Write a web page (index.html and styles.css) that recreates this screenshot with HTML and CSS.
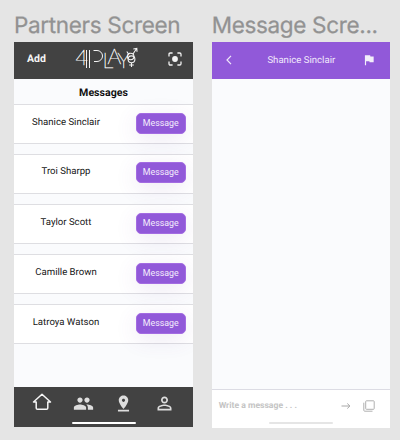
FILE: index.html
```html
<!DOCTYPE html>
<html lang="en">
<head>
<meta charset="utf-8">
<title>Partners and messages</title>
<link rel="stylesheet" href="styles.css">
</head>
<body>
<main class="board">
  <section class="frame">
    <h1 class="frame-title">Partners Screen</h1>
    <div class="phone partners">
      <header class="bar dark">
        <span class="add">Add</span>
        <svg class="logo" width="64" height="24" viewBox="75 46 64 24" fill="none" stroke="#f4f4f4" stroke-width="1">
          <text class="logo-text" x="75.500 102.500 107.500 117.500" y="65.500 68.500 64.500 68.500">4LAY</text>
          <path d="M86.500 51v18M89.500 51v18M93.500 51.500h3.500a5.500 5.500 0 0 1 0 11h-3"/>
          <g stroke-width="1.1"><circle cx="130.700" cy="57.500" r="3.200"/><circle cx="131.500" cy="60.300" r="3.400"/><path d="M131.500 64v4M129.200 66h4.600M133 55l3.300-5M133.300 50l3.500-.5.2 3.300M128.500 55l-1.700-2.500"/></g>
        </svg>
        <svg class="scan" width="14" height="14" viewBox="0 0 14 14" fill="none" stroke="#f2f2f2" stroke-width="1.3"><path d="M1 4.600V2.300Q1 1 2.300 1h2.300M9.400 1h2.300Q13 1 13 2.300v2.300M13 9.400v2.300q0 1.300-1.300 1.300H9.400M4.600 13H2.300Q1 13 1 11.700V9.400"/><circle cx="7" cy="7" r="2.900" fill="#f2f2f2" stroke="none"/></svg>
      </header>
      <h2 class="heading">Messages</h2>
      <ul class="list">
        <li class="row"><span class="name">Shanice Sinclair</span><button class="btn">Message</button></li>
        <li class="row raised"><span class="name">Troi Sharpp</span><button class="btn">Message</button></li>
        <li class="row"><span class="name">Taylor Scott</span><button class="btn">Message</button></li>
        <li class="row"><span class="name">Camille Brown</span><button class="btn">Message</button></li>
        <li class="row"><span class="name">Latroya Watson</span><button class="btn">Message</button></li>
      </ul>
      <nav class="tabs">
        <div class="tab-icons">
          <svg class="home" width="20" height="18" viewBox="0 0 20 18" fill="none" stroke="#f5f5f5" stroke-width="1.5" stroke-linejoin="round"><path d="M4.200 9H1.500L10 1.200 18.500 9h-2.700v6q0 1.300-1.300 1.300h-9q-1.300 0-1.300-1.300z"/></svg>
          <svg width="21" height="21" viewBox="0.500 0 23 24" fill="#dedede"><path d="M16 11c1.660 0 2.990-1.340 2.990-3S17.660 5 16 5s-3 1.340-3 3 1.340 3 3 3zm-8 0c1.660 0 2.990-1.340 2.990-3S9.660 5 8 5 5 6.340 5 8s1.340 3 3 3zm0 2c-2.330 0-7 1.170-7 3.500V19h14v-2.500C15 14.170 10.330 13 8 13zm8 0c-.290 0-.620.020-.970.050 1.160.840 1.970 1.970 1.970 3.450V19h6v-2.500c0-2.330-4.670-3.500-7-3.500z"/></svg>
          <svg width="19" height="19" viewBox="0 0 24 24" fill="#dedede"><path d="M18 8c0-3.310-2.690-6-6-6S6 4.690 6 8c0 4.500 6 11 6 11s6-6.500 6-11zm-8 0c0-1.100.9-2 2-2s2 .9 2 2-.890 2-2 2c-1.100 0-2-.9-2-2zM5 20v2h14v-2H5z"/></svg>
          <svg width="21" height="21" viewBox="0 0 24 24" fill="#dedede"><path d="M12 5.900a2.100 2.100 0 1 1 0 4.200 2.100 2.100 0 0 1 0-4.200m0 9c2.970 0 6.100 1.460 6.100 2.100v1.100H5.900V17c0-.640 3.130-2.100 6.100-2.100M12 4C9.790 4 8 5.790 8 8s1.790 4 4 4 4-1.790 4-4-1.790-4-4-4zm0 9c-2.670 0-8 1.340-8 4v3h16v-3c0-2.660-5.330-4-8-4z"/></svg>
        </div>
        <div class="home-line"></div>
      </nav>
    </div>
  </section>
  <section class="frame">
    <h1 class="frame-title">Message Scre...</h1>
    <div class="phone chat">
      <header class="bar purple">
        <svg class="back" width="8" height="12" viewBox="0 0 8 12" fill="none" stroke="#f0e8fa" stroke-width="1.200"><path d="M6 1.800 2 6l4 4.200"/></svg>
        <span class="chat-name">Shanice Sinclair</span>
        <svg class="flag" width="14" height="14" viewBox="0 0 24 24" fill="#f2eefa"><path d="M14.400 6 14 4H5v17h2v-7h5.600l.4 2h7V6z"/></svg>
      </header>
      <div class="thread"></div>
      <footer class="composer">
        <div class="compose-row">
          <span class="hint">Write a message . . .</span>
          <svg class="send" width="10" height="8" viewBox="0 0 10 8" fill="none" stroke="#a8a8a8" stroke-width="1"><path d="M.5 4h8.300M6.300 1.500 8.900 4 6.300 6.500"/></svg>
          <svg class="stack" width="12" height="12" viewBox="0 0 12 12" fill="none" stroke="#b0b0b0" stroke-width="1"><rect x="2.700" y=".8" width="8.500" height="8.500" rx=".7"/><path d="M.8 2.700v7.600q0 .9.9.9h7.800"/></svg>
        </div>
        <div class="home-line pale"></div>
      </footer>
    </div>
  </section>
</main>
</body>
</html>
```
FILE: styles.css
```css
* { box-sizing: border-box; }
body { margin: 0; background: #e5e5e5; font-family: Roboto, "Liberation Sans", sans-serif; text-rendering: geometricPrecision; }
.board { display: flex; gap: 18.700px; width: 400px; height: 440px; padding: 12px 0 0 14px; overflow: hidden; }
.frame { width: 179px; flex: none; }
.frame-title { margin: 0; height: 29.500px; font: 400 22.500px/27px Inter, sans-serif; color: #929292; letter-spacing: -.33px; white-space: nowrap; -webkit-text-stroke: .25px #929292; }
.phone { display: flex; flex-direction: column; background: #fafbfd; overflow: hidden; }
.partners { height: 385.500px; }
.chat { height: 386.500px; width: 178.300px; }
.bar { display: flex; align-items: center; height: 37.500px; flex: none; }
.dark { background: #424242; padding: 0 11px 0 13px; }
.add { width: 19px; font-size: 10.500px; font-weight: 700; color: #f5f5f5; white-space: nowrap; margin-top: -3px; }
.logo { margin: -6px 0 0 29px; overflow: visible; }
.logo-text { font: 100 21.500px Lato, sans-serif; fill: #f4f4f4; stroke: #f4f4f4; stroke-width: .5px; }
.scan { margin-left: auto; margin-top: -3px; }
.heading { margin: 0; height: 25px; flex: none; font-size: 10.600px; line-height: 28px; font-weight: 700; text-align: center; color: #111; }
.list { list-style: none; margin: 0; padding: 0; display: flex; flex-direction: column; gap: 10px; }
.row { display: flex; align-items: center; height: 40px; padding: 0 7px 1.500px 0; border-top: 1px solid #dedee2; border-bottom: 1px solid #dedee2; background: #fff; }
.raised { padding-bottom: 4px; }
.name { width: 104px; text-align: center; font-size: 9.600px; line-height: 12px; color: #161616; white-space: nowrap; }
.btn { margin: 0 0 0 auto; width: 50.500px; height: 21px; padding: 0; border: 1px solid #a36be2; border-radius: 5px; background: #9159d9; color: #f4eefc; font: 400 8.800px/18px Roboto, sans-serif; box-shadow: 0 5px 22px rgba(105, 65, 160, .12); }
.tabs { margin-top: auto; height: 40.500px; flex: none; background: #424242; display: flex; flex-direction: column; align-items: center; justify-content: space-between; padding: 6px 0 3px; }
.tab-icons { display: flex; align-items: center; justify-content: space-between; width: 100%; padding: 0 18px; }
.home { margin-top: -2px; }
.home-line { width: 64px; height: 2px; border-radius: 2px; background: #fff; }
.purple { background: #9159d9; padding: 0 13.500px; }
.chat-name { flex: 1; text-align: center; font-size: 9.600px; color: #f2eafc; white-space: nowrap; padding-left: 7px; margin-top: 1px; }
.thread { flex: 1; }
.composer { height: 39.500px; flex: none; background: #fff; border-top: 1px solid #dcdce4; display: flex; flex-direction: column; align-items: center; justify-content: space-between; padding: 9px 0 4px; }
.compose-row { display: flex; align-items: center; width: 100%; padding: 0 15px 0 7px; height: 14px; }
.hint { font-size: 8.600px; line-height: 14px; padding-top: 1px; font-weight: 700; color: #c4c4c4; white-space: nowrap; }
.send { margin-left: auto; }
.stack { margin-left: 12px; }
.pale { background: #e5e5e5; }
```
